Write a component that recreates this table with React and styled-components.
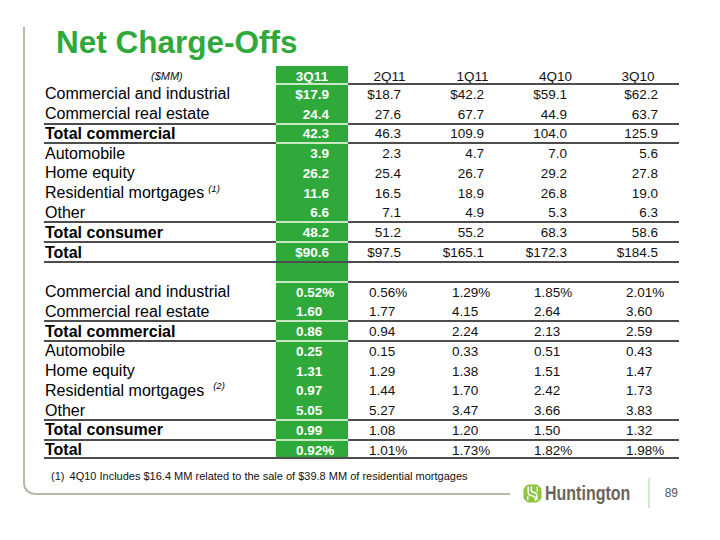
import React from "react";
import styled, { createGlobalStyle } from "styled-components";

const GREEN = "#2fa93a";
const RULE = "#4d4d4d";
const LIGHT = "#c9e8c4";
const FRAME = "#bcb5a8";

const Global = createGlobalStyle`
  html, body { margin: 0; padding: 0; background: #fff; }
  body { font-family: "Liberation Sans", Arial, sans-serif; color: #000; }
`;

const Slide = styled.div`
  width: 720px;
  height: 540px;
  box-sizing: border-box;
  padding-top: 50px;
  background: #fff;
  overflow: hidden;
`;

const Body = styled.div`
  margin-left: 23px;
  height: 455px;
  border-left: 2px solid ${FRAME};
`;

const Title = styled.h1`
  margin: -23px 0 0 31px;
  font-size: 31.5px;
  line-height: 31px;
  font-weight: 700;
  color: ${GREEN};
`;

const Table = styled.div`
  margin: 8px 0 0 19px;
  width: 635px;
`;

const Row = styled.div`
  display: flex;
  height: ${(p) => p.$h}px;
`;

const ruleColor = (rule, kind) => {
  if (rule === "none") return "transparent";
  if (kind === "label") return rule === "data" ? "transparent" : RULE;
  if (kind === "green") return rule === "heavy" ? RULE : LIGHT;
  return RULE;
};

const Cell = styled.div`
  box-sizing: border-box;
  flex: 0 0 ${(p) => p.$w}px;
  display: flex;
  align-items: center;
  justify-content: ${(p) =>
    p.$align === "right" ? "flex-end" : p.$align === "center" ? "center" : "flex-start"};
  padding-top: 3px;
  padding-left: ${(p) => p.$pl || 0}px;
  padding-right: ${(p) => p.$pr || 0}px;
  border-top: 2px solid ${(p) => ruleColor(p.$rule, p.$kind)};
  border-bottom: 2px solid ${(p) => (p.$last ? RULE : "transparent")};
  white-space: nowrap;
`;

const LabelCell = styled(Cell)`
  font-size: 16px;
  font-weight: ${(p) => (p.$bold ? 700 : 400)};
  padding-left: 1px;
`;

const UnitCell = styled(Cell)`
  font-size: 11px;
  font-style: italic;
  padding-left: 107px;
  color: #111;
`;

const GreenCell = styled(Cell)`
  background: ${GREEN};
  color: #fff;
  font-weight: 700;
  font-size: 13.5px;
`;

const DataCell = styled(Cell)`
  font-size: 13.5px;
  color: #111;
`;

const Note = styled.span`
  font-size: 9.5px;
  font-style: italic;
  margin-left: ${(p) => p.$gap}px;
  position: relative;
  top: -5px;
`;

const Footnote = styled.div`
  margin: 10px 0 0 26px;
  font-size: 11px;
  line-height: 14px;
  color: #111;
`;

const NoteMark = styled.span`
  margin-right: 2px;
`;

const Footer = styled.div`
  display: flex;
  align-items: center;
  height: 22px;
`;

const FooterRule = styled.div`
  align-self: flex-start;
  box-sizing: border-box;
  margin-left: 23px;
  width: 487px;
  height: 13px;
  border-left: 2px solid ${FRAME};
  border-bottom: 2px solid ${FRAME};
  border-bottom-left-radius: 12px;
`;

const LogoMark = styled.svg`
  margin-left: 13px;
  flex: 0 0 auto;
`;

const LogoText = styled.span`
  display: inline-block;
  margin-left: 3px;
  margin-right: -21px;
  font-weight: 700;
  font-size: 20px;
  line-height: 1;
  color: #6b6457;
  transform: scaleX(0.8);
  transform-origin: left center;
`;

const Divider = styled.div`
  margin-left: 17px;
  width: 2px;
  height: 30px;
  background: #d4ecca;
  flex: 0 0 auto;
`;

const PageNum = styled.span`
  margin-left: 15px;
  font-size: 12px;
  color: #555;
`;

const GREEN_COL = { w: 72, pr: 19, pl: 20 };
const COLS = [
  { w: 83, pr: 30, pl: 21 },
  { w: 83, pr: 30, pl: 21 },
  { w: 83, pr: 30, pl: 20 },
  { w: 82, pr: 21, pl: 29 },
];
const ROW_H = 19.78;

const amounts = [
  ["Commercial and industrial", "$17.9", ["$18.7", "$42.2", "$59.1", "$62.2"], "data"],
  ["Commercial real estate", "24.4", ["27.6", "67.7", "44.9", "63.7"], "none"],
  ["Total commercial", "42.3", ["46.3", "109.9", "104.0", "125.9"], "full", true],
  ["Automobile", "3.9", ["2.3", "4.7", "7.0", "5.6"], "full"],
  ["Home equity", "26.2", ["25.4", "26.7", "29.2", "27.8"], "none"],
  ["Residential mortgages", "11.6", ["16.5", "18.9", "26.8", "19.0"], "none", false, "(1)", 4],
  ["Other", "6.6", ["7.1", "4.9", "5.3", "6.3"], "none"],
  ["Total consumer", "48.2", ["51.2", "55.2", "68.3", "58.6"], "full", true],
  ["Total", "$90.6", ["$97.5", "$165.1", "$172.3", "$184.5"], "full", true],
];

const ratios = [
  ["Commercial and industrial", "0.52%", ["0.56%", "1.29%", "1.85%", "2.01%"], "data"],
  ["Commercial real estate", "1.60", ["1.77", "4.15", "2.64", "3.60"], "none"],
  ["Total commercial", "0.86", ["0.94", "2.24", "2.13", "2.59"], "full", true],
  ["Automobile", "0.25", ["0.15", "0.33", "0.51", "0.43"], "full"],
  ["Home equity", "1.31", ["1.29", "1.38", "1.51", "1.47"], "none"],
  ["Residential mortgages", "0.97", ["1.44", "1.70", "2.42", "1.73"], "none", false, "(2)", 9],
  ["Other", "5.05", ["5.27", "3.47", "3.66", "3.83"], "none"],
  ["Total consumer", "0.99", ["1.08", "1.20", "1.50", "1.32"], "full", true],
  ["Total", "0.92%", ["1.01%", "1.73%", "1.82%", "1.98%"], "full", true],
];

function DataRow({ row, align, last }) {
  const [label, green, vals, rule, bold, note, gap] = row;
  return (
    <Row $h={ROW_H}>
      <LabelCell $w={232} $rule={rule} $kind="label" $bold={bold} $last={last}>
        {label}
        {note && <Note $gap={gap}>{note}</Note>}
      </LabelCell>
      <GreenCell
        $w={GREEN_COL.w}
        $rule={rule}
        $kind="green"
        $align={align}
        $pl={align === "left" ? GREEN_COL.pl : 0}
        $pr={align === "right" ? GREEN_COL.pr : 0}
        $last={last}
      >
        {green}
      </GreenCell>
      {vals.map((v, i) => (
        <DataCell
          key={i}
          $w={COLS[i].w}
          $rule={rule}
          $kind="data"
          $align={align}
          $pl={align === "left" ? COLS[i].pl : 0}
          $pr={align === "right" ? COLS[i].pr : 0}
          $last={last}
        >
          {v}
        </DataCell>
      ))}
    </Row>
  );
}

function HuntingtonMark() {
  return (
    <LogoMark width="19" height="19" viewBox="0 0 20 20">
      <path
        d="M6 0.5 H14 Q15 0.5 16 1.3 L18.7 4 Q19.5 5 19.5 6 V14 Q19.5 15 18.7 16 L16 18.7 Q15 19.5 14 19.5 H6 Q5 19.5 4 18.7 L1.3 16 Q0.5 15 0.5 14 V6 Q0.5 5 1.3 4 L4 1.3 Q5 0.5 6 0.5 Z"
        fill="#8cc540"
      />
      <path
        d="M5.5 3 V9.5 Q5.5 11 7 11.6 L11.5 13 Q13 13.6 13 15 V17.5"
        stroke="#fff"
        strokeWidth="1.6"
        fill="none"
      />
      <path
        d="M8.8 2.5 V6.5 Q8.8 8 10.3 8.5 L13 9.4 Q14.5 10 14.5 11.5 V17"
        stroke="#fff"
        strokeWidth="1.6"
        fill="none"
      />
      <path d="M15 3 V8" stroke="#fff" strokeWidth="1.6" fill="none" />
      <path d="M5 13 V17" stroke="#fff" strokeWidth="1.6" fill="none" />
    </LogoMark>
  );
}

export default function App() {
  return (
    <>
      <Global />
      <Slide>
        <Body>
          <Title>Net Charge-Offs</Title>
          <Table>
            <Row $h={17}>
              <UnitCell $w={232} $rule="none">($MM)</UnitCell>
              <GreenCell $w={GREEN_COL.w} $rule="none" $align="center">
                3Q11
              </GreenCell>
              {["2Q11", "1Q11", "4Q10", "3Q10"].map((h, i) => (
                <DataCell key={h} $w={COLS[i].w} $rule="none" $align="center">
                  {h}
                </DataCell>
              ))}
            </Row>
            {amounts.map((r) => (
              <DataRow key={"a" + r[0]} row={r} align="right" />
            ))}
            <Row $h={ROW_H}>
              <LabelCell $w={232} $rule="heavy" $kind="label" />
              <GreenCell $w={GREEN_COL.w} $rule="heavy" $kind="green" />
              {COLS.map((c, i) => (
                <DataCell key={i} $w={c.w} $rule="heavy" $kind="data" />
              ))}
            </Row>
            {ratios.map((r, i) => (
              <DataRow key={"r" + r[0]} row={r} align="left" last={i === ratios.length - 1} />
            ))}
          </Table>
          <Footnote>
            <NoteMark>(1)</NoteMark> 4Q10 Includes $16.4 MM related to the sale of $39.8 MM of
            residential mortgages
          </Footnote>
        </Body>
        <Footer>
          <FooterRule />
          <HuntingtonMark />
          <LogoText>Huntington</LogoText>
          <Divider />
          <PageNum>89</PageNum>
        </Footer>
      </Slide>
    </>
  );
}
